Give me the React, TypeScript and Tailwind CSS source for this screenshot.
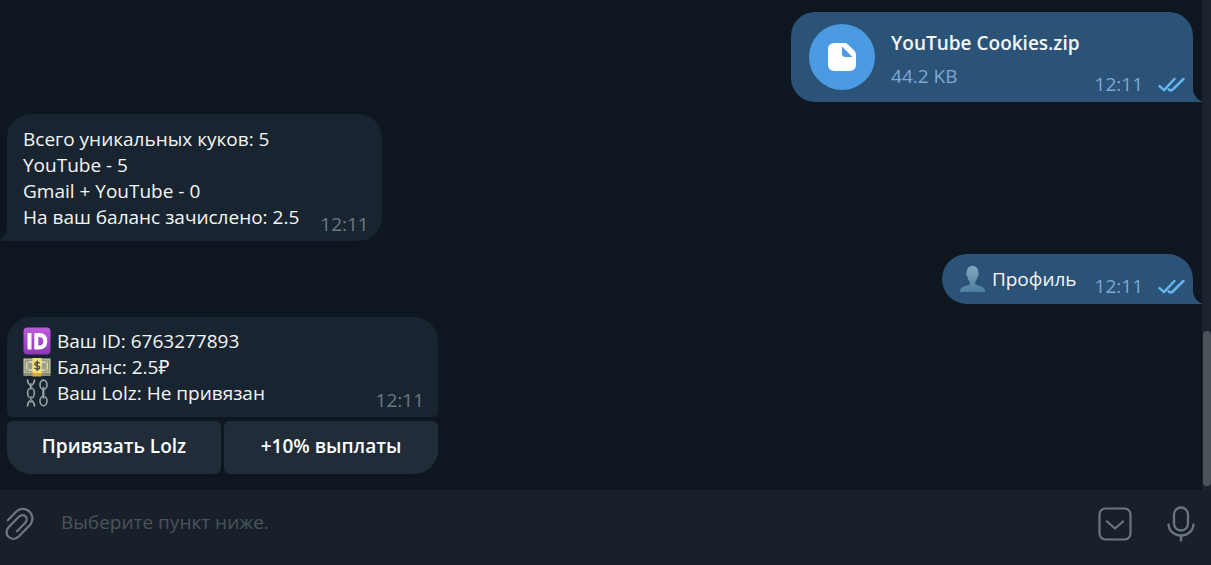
import type { ReactNode } from 'react';

const FileIcon = () => (
  <svg width="28" height="28" viewBox="0 0 28 28" aria-hidden="true">
    <path
      d="M6.5 0H16.5Q18.5 0 20 1.4L26.6 8Q28 9.5 28 11.5V21.5Q28 28 21.5 28H6.5Q0 28 0 21.5V6.5Q0 0 6.5 0Z"
      fill="#ffffff"
    />
    <path d="M14 3.6V10.5Q14 14 17.5 14H24.4Z" fill="#4b9be3" />
  </svg>
);

const Checks = () => (
  <svg width="27" height="15" viewBox="0 0 27 15" fill="none" stroke="#65b4f0" strokeWidth="2.5" strokeLinecap="round" strokeLinejoin="round" aria-label="Read">
    <path d="M1.6 9.2L6 13.2L16.4 2" />
    <path d="M10.6 12.2L12 13.4L14.2 13L25.4 2" />
  </svg>
);

const IdEmoji = () => (
  <svg width="28" height="28" viewBox="0 0 28 28" role="img" aria-label="ID">
    <defs>
      <linearGradient id="idFill" x1="0" y1="0" x2="0" y2="1">
        <stop offset="0" stopColor="#bd5cdc" />
        <stop offset="1" stopColor="#8c38b8" />
      </linearGradient>
    </defs>
    <rect x="0.5" y="0.5" width="27" height="27" rx="4" fill="url(#idFill)" />
    <rect x="4.5" y="6" width="4" height="16.5" rx="0.6" fill="#fff" />
    <path d="M13.3 8V20.5H16C20.8 20.5 22.3 18 22.3 14.2C22.3 10.4 20.8 8 16 8Z" fill="none" stroke="#fff" strokeWidth="4" />
  </svg>
);

const MoneyEmoji = () => (
  <svg width="28" height="28" viewBox="0 0 28 28" role="img" aria-label="Money">
    <rect x="0.5" y="5.5" width="27" height="15" fill="#d5d2b4" />
    <rect x="0.5" y="20" width="27" height="3" fill="#8a8b72" />
    <rect x="2.2" y="7.2" width="23.6" height="11.6" fill="none" stroke="#878c70" strokeWidth="1.2" />
    <ellipse cx="7" cy="13" rx="2.6" ry="3.6" fill="#98a083" />
    <ellipse cx="21" cy="13" rx="2.6" ry="3.6" fill="#98a083" />
    <path d="M3.5 9.6L5.5 8.4M3.5 16.4L5.5 17.6M24.5 9.6L22.5 8.4M24.5 16.4L22.5 17.6" stroke="#9a5d4e" />
    <rect x="9.5" y="5" width="9" height="15" fill="#f5df83" />
    <rect x="9.5" y="20" width="9" height="3.5" fill="#dfa83c" />
    <path d="M16.6 10.3C15.7 9 11.8 8.9 11.8 11C11.8 13.2 16.7 11.9 16.7 14.4C16.7 16.5 12.6 16.5 11.5 14.9M14.2 7.5V17.9" fill="none" stroke="#4f4938" strokeWidth="1.4" />
  </svg>
);

const ChainsEmoji = () => (
  <svg width="28" height="28" viewBox="0 0 28 28" fill="none" role="img" aria-label="Chains">
    <g stroke="#9aa4a9" strokeWidth="1.6" strokeLinecap="round">
      <path d="M4.5 1C4.5 4 6 5.5 8 6.8C10 5.5 11.5 4 11.5 1" />
      <ellipse cx="8" cy="14" rx="3.4" ry="5" />
      <path d="M4.5 27C4.5 24 6 22.5 8 21.2C10 22.5 11.5 24 11.5 27" />
      <ellipse cx="20.5" cy="5.8" rx="3.5" ry="4.7" />
      <ellipse cx="20.5" cy="22" rx="3.5" ry="4.7" />
    </g>
    <path d="M8 5V10M8 18V23M20.5 8.5V19" stroke="#75828a" strokeWidth="2.2" strokeLinecap="round" />
    <path d="M7.6 5.5V9M20.1 9.5V18" stroke="#cbd1d3" strokeWidth="0.8" />
  </svg>
);

const PersonEmoji = () => (
  <svg width="28" height="28" viewBox="0 0 28 28" role="img" aria-label="Person">
    <defs>
      <linearGradient id="personFill" x1="0" y1="0" x2="0" y2="1">
        <stop offset="0" stopColor="#83a8c1" />
        <stop offset="1" stopColor="#4d7e9f" />
      </linearGradient>
    </defs>
    <path
      d="M14.5 1C18.2 1 20.4 3.6 20.3 7.6C21.2 8.2 20.8 10.8 19.6 11.6C19.2 14 18.4 15.5 17.3 16.6V19.2C18.5 21 26.8 20.5 27 26V27H2V26C2.2 20.5 10.5 21 11.7 19.2V16.6C10.6 15.5 9.8 14 9.4 11.6C8.2 10.8 7.8 8.2 8.7 7.6C8.6 3.6 10.8 1 14.5 1Z"
      fill="url(#personFill)"
    />
  </svg>
);

const PaperclipIcon = () => (
  <svg width="30" height="34" viewBox="0 0 30 34" fill="none" stroke="#6b767f" strokeWidth="2.3" strokeLinecap="round" aria-hidden="true">
    <path d="M2.8 13.2L10.6 5.2C19.5 -3.8 32.5 7.5 25.4 17.6L14 29.2C6.8 36.4 -2.6 27.2 3.6 20.2L13.6 10C18.8 5 24.6 11 20 16L12 24.2" />
  </svg>
);

const KeyboardDownIcon = () => (
  <svg width="34" height="34" viewBox="0 0 34 34" fill="none" stroke="#6b767f" strokeWidth="2.2" strokeLinecap="round" strokeLinejoin="round" aria-hidden="true">
    <rect x="1.5" y="1.5" width="31" height="31" rx="6" />
    <path d="M9 14.5L17 21.5L25 14.5" />
  </svg>
);

const MicIcon = () => (
  <svg width="28" height="36" viewBox="0 0 28 36" fill="none" stroke="#6b767f" strokeWidth="2.3" aria-hidden="true">
    <rect x="7" y="1.5" width="14" height="23" rx="7" />
    <path d="M1.5 17.5C1.5 24.5 6.8 29.5 14 29.5C21.2 29.5 26.5 24.5 26.5 17.5M14 29.5V35.5" />
  </svg>
);

const TailRight = () => (
  <svg className="absolute bottom-0 left-full" width="9" height="26" viewBox="0 0 9 26" fill="#2b5378" aria-hidden="true">
    <path d="M0 0V12C0 18 3 23 9 25.5V26H0Z" />
  </svg>
);

const TailLeft = () => (
  <svg className="absolute right-full bottom-0" width="7" height="26" viewBox="0 0 7 26" fill="#182530" aria-hidden="true">
    <path d="M7 0V26H0V25.2C5 22 7 18 7 11Z" />
  </svg>
);

const Time = ({ sent }: { sent?: boolean }) =>
  sent ? (
    <div className="flex items-center gap-[15px] self-end text-[#7da8d3]">
      <time>12:11</time>
      <Checks />
    </div>
  ) : (
    <time className="self-end text-[#6b7883]">12:11</time>
  );

const EmojiLine = ({ icon, children }: { icon: ReactNode; children: ReactNode }) => (
  <p className="flex h-[26px] items-center gap-[6px]">
    {icon}
    <span>{children}</span>
  </p>
);

export default function App() {
  return (
    <div className="flex min-h-screen flex-col bg-[#0e1620] font-['Open_Sans','Noto_Sans',sans-serif] text-[19px] leading-[26px] text-[#f5f5f5]">
      <div className="flex flex-1">
        <main className="flex flex-1 flex-col items-start pt-3 pr-[9px] pb-4 pl-[7px]">
          <section className="relative flex self-end rounded-[24px] rounded-br-none bg-[#2b5378] pt-3 pr-2 pb-[5px] pl-[18px]">
            <button aria-label="Open file" className="mb-[7px] flex size-[66px] items-center justify-center rounded-full bg-[#4b9be3]">
              <FileIcon />
            </button>
            <div className="ml-4 flex flex-col gap-[7px] pt-[6px]">
              <h2 className="font-semibold">YouTube Cookies.zip</h2>
              <p className="text-[#7da8d3]">44.2 KB</p>
            </div>
            <div className="ml-[15px] flex">
              <Time sent />
            </div>
            <TailRight />
          </section>

          <section className="relative mt-3 flex gap-[21px] rounded-[24px] rounded-bl-none bg-[#182530] pt-3 pr-[13px] pb-1 pl-4">
            <div className="pb-[7px]">
              <p>Всего уникальных куков: 5</p>
              <p>YouTube - 5</p>
              <p>Gmail + YouTube - 0</p>
              <p>На ваш баланс зачислено: 2.5</p>
            </div>
            <Time />
            <TailLeft />
          </section>

          <section className="relative mt-[13px] flex gap-[18px] self-end rounded-[25px] rounded-br-none bg-[#2b5378] pt-3 pr-2 pb-[5px] pl-4">
            <div className="pb-[7px]">
              <EmojiLine icon={<PersonEmoji />}>Профиль</EmojiLine>
            </div>
            <Time sent />
            <TailRight />
          </section>

          <section className="mt-[13px] w-[431px] max-w-full">
            <div className="flex justify-between rounded-t-[24px] rounded-b-[6px] bg-[#182530] pt-[11px] pr-[14px] pb-1 pl-4">
              <div className="pb-[7px]">
                <EmojiLine icon={<IdEmoji />}>Ваш ID: 6763277893</EmojiLine>
                <EmojiLine icon={<MoneyEmoji />}>Баланс: 2.5₽</EmojiLine>
                <EmojiLine icon={<ChainsEmoji />}>Ваш Lolz: Не привязан</EmojiLine>
              </div>
              <Time />
            </div>
            <div className="mt-1 grid grid-cols-2 gap-[3px] font-semibold text-white">
              <button className="rounded-[6px] rounded-bl-[24px] bg-[#202d38] pt-3 pb-[15px]">Привязать Lolz</button>
              <button className="rounded-[6px] rounded-br-[24px] bg-[#202d38] pt-3 pb-[15px]">+10% выплаты</button>
            </div>
          </section>
        </main>

        {/* Scrollbar */}
        <div className="flex w-[9px] flex-col justify-end bg-[#1b242d] pb-1 pl-px">
          <div className="h-[155px] rounded-[4px] bg-[#4b535b]" />
        </div>
      </div>

      <footer className="flex items-center border-b border-[#0e1620] bg-[#18212a] pt-4 pr-4 pb-6 pl-[5px]">
        <button aria-label="Attach file">
          <PaperclipIcon />
        </button>
        <input
          type="text"
          aria-label="Message"
          placeholder="Выберите пункт ниже."
          className="mb-1 ml-[26px] min-w-0 flex-1 bg-transparent outline-none placeholder:text-[#4a535b]"
        />
        <div className="flex items-center gap-[35px]">
          <button aria-label="Hide keyboard">
            <KeyboardDownIcon />
          </button>
          <button aria-label="Record voice message">
            <MicIcon />
          </button>
        </div>
      </footer>
    </div>
  );
}
